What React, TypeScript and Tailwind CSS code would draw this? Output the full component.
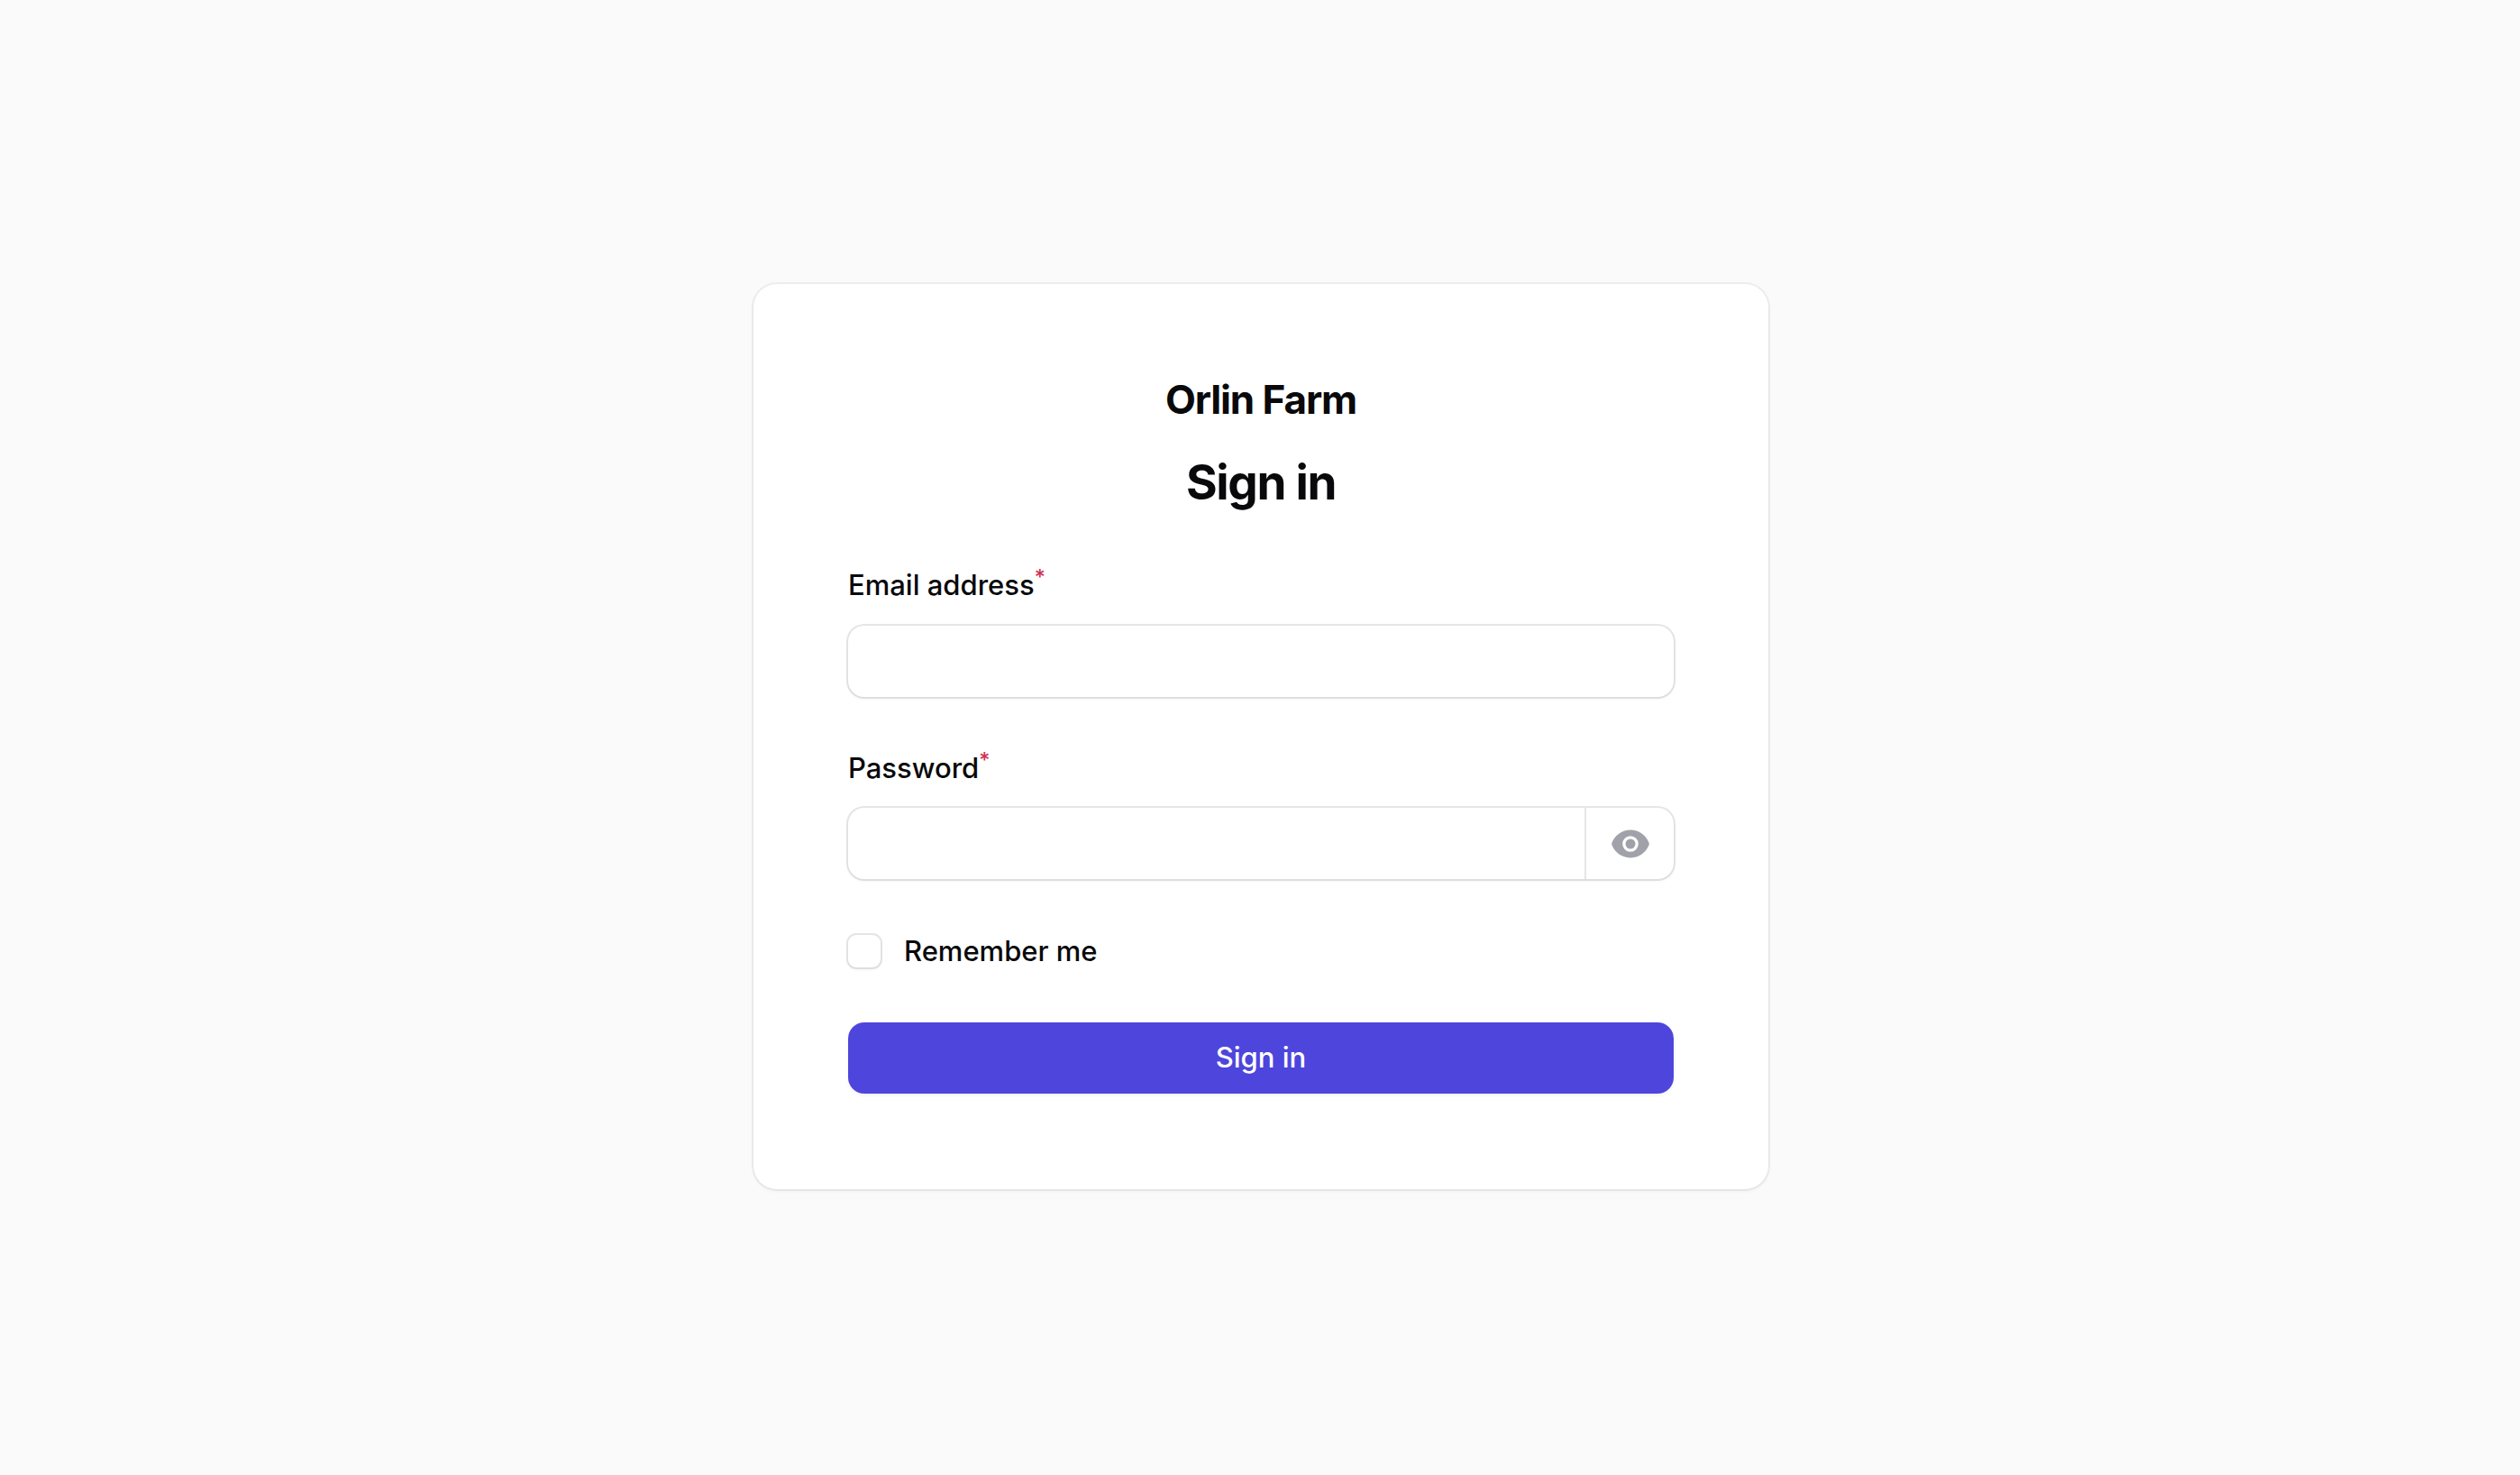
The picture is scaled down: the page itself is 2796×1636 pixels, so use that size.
import { useState } from 'react';
import type { ReactNode } from 'react';
import { HiMiniEye } from 'react-icons/hi2';

function FieldLabel({ htmlFor, children }: { htmlFor: string; children: ReactNode }) {
  return (
    <label htmlFor={htmlFor} className="block text-[31px] leading-[51px] font-medium text-zinc-950">
      {children}
      <sup className="font-medium text-[#d03050]">*</sup>
    </label>
  );
}

function InputShell({ children }: { children: ReactNode }) {
  return (
    <div className="flex h-[79px] overflow-hidden rounded-[18px] bg-white shadow-[0_2px_4px_rgba(0,0,0,0.05)] ring-2 ring-zinc-950/10 focus-within:ring-4 focus-within:ring-[#4e45dc]">
      {children}
    </div>
  );
}

export default function App() {
  const [visible, setVisible] = useState(false);

  return (
    <div className="flex min-h-screen flex-col items-center justify-center bg-[#fafafa] pb-[2px] pl-[2px] font-['Inter',sans-serif] text-zinc-950 antialiased">
      <main className="w-full max-w-[1126px] rounded-[26px] bg-white px-[105px] py-[106px] shadow-[0_2px_4px_rgba(0,0,0,0.05)] ring-2 ring-zinc-950/5">
        <section className="flex flex-col gap-[53px]">
          <header className="flex flex-col items-center gap-[35px] text-center">
            <div className="text-[44px] leading-[44px] font-bold tracking-tight">Orlin Farm</div>
            <h1 className="text-[53px] leading-[70px] font-bold tracking-tight">Sign in</h1>
          </header>

          <form className="flex flex-col gap-[53px]" onSubmit={(event) => event.preventDefault()}>
            <div className="flex flex-col gap-[20px]">
              <FieldLabel htmlFor="email">Email address</FieldLabel>
              <InputShell>
                <input
                  id="email"
                  type="email"
                  required
                  autoComplete="email"
                  className="min-w-0 flex-1 bg-transparent px-[26px] text-[31px] outline-none"
                />
              </InputShell>
            </div>

            <div className="flex flex-col gap-[19px]">
              <FieldLabel htmlFor="password">Password</FieldLabel>
              <InputShell>
                <input
                  id="password"
                  type={visible ? 'text' : 'password'}
                  required
                  autoComplete="current-password"
                  className="min-w-0 flex-1 bg-transparent px-[26px] text-[31px] outline-none"
                />
                <button
                  type="button"
                  aria-label={visible ? 'Hide password' : 'Show password'}
                  onClick={() => setVisible(!visible)}
                  className="flex w-[99px] items-center justify-center border-l-2 border-zinc-950/10 text-[#a1a1aa]"
                >
                  <HiMiniEye className="size-11" />
                </button>
              </InputShell>
            </div>

            <label className="flex items-center gap-[26px] text-[31px] leading-[53px] font-medium">
              <input
                type="checkbox"
                name="remember"
                className="size-9 appearance-none rounded-[9px] bg-white shadow-[0_2px_4px_rgba(0,0,0,0.05)] ring-2 ring-zinc-950/10 checked:bg-[#4e45dc]"
              />
              Remember me
            </label>

            <button
              type="submit"
              className="h-[79px] rounded-[18px] bg-[#4e45dc] text-[31px] font-medium text-white shadow-[0_2px_4px_rgba(0,0,0,0.05)]"
            >
              Sign in
            </button>
          </form>
        </section>
      </main>
    </div>
  );
}
